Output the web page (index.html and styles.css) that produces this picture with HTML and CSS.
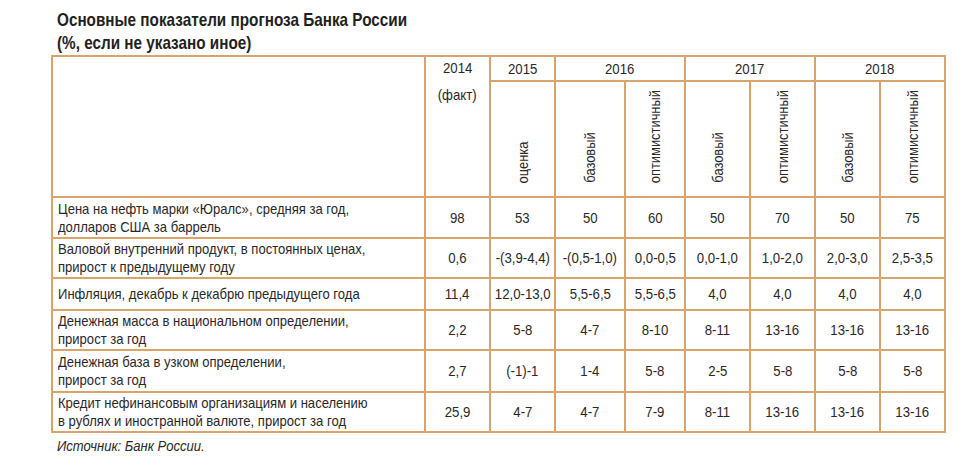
FILE: index.html
```html
<!DOCTYPE html>
<html lang="ru">
<head>
<meta charset="utf-8">
<link rel="stylesheet" href="styles.css">
</head>
<body>
<div class="page">
  <h1 class="title"><span class="sx">Основные показатели прогноза Банка России<br>(%, если не указано иное)</span></h1>
  <table class="grid">
    <colgroup>
      <col class="c-label"><col class="c65"><col class="c65"><col class="c70"><col class="c60"><col class="c65"><col class="c65"><col class="c65"><col class="c64">
    </colgroup>
    <thead>
      <tr class="years">
        <th rowspan="2" class="blank"></th>
        <th rowspan="2" class="fact"><div><span class="num">2014</span></div><div class="fact-note"><span class="num">(факт)</span></div></th>
        <th><span class="num">2015</span></th>
        <th colspan="2"><span class="num">2016</span></th>
        <th colspan="2"><span class="num">2017</span></th>
        <th colspan="2"><span class="num">2018</span></th>
      </tr>
      <tr class="scen">
        <th><span class="vert"><span class="vs">оценка</span></span></th>
        <th><span class="vert"><span class="vs">базовый</span></span></th>
        <th><span class="vert"><span class="vs">оптимистичный</span></span></th>
        <th><span class="vert"><span class="vs">базовый</span></span></th>
        <th><span class="vert"><span class="vs">оптимистичный</span></span></th>
        <th><span class="vert"><span class="vs">базовый</span></span></th>
        <th><span class="vert"><span class="vs">оптимистичный</span></span></th>
      </tr>
    </thead>
    <tbody>
      <tr class="row-a">
        <td class="label"><span class="sx">Цена на нефть марки «Юралс», средняя за год,<br>долларов США за баррель</span></td>
        <td><span class="num">98</span></td><td><span class="num">53</span></td><td><span class="num">50</span></td><td><span class="num">60</span></td><td><span class="num">50</span></td><td><span class="num">70</span></td><td><span class="num">50</span></td><td><span class="num">75</span></td>
      </tr>
      <tr class="row-b">
        <td class="label"><span class="sx">Валовой внутренний продукт, в постоянных ценах,<br>прирост к предыдущему году</span></td>
        <td><span class="num">0,6</span></td><td><span class="num">-(3,9-4,4)</span></td><td><span class="num">-(0,5-1,0)</span></td><td><span class="num">0,0-0,5</span></td><td><span class="num">0,0-1,0</span></td><td><span class="num">1,0-2,0</span></td><td><span class="num">2,0-3,0</span></td><td><span class="num">2,5-3,5</span></td>
      </tr>
      <tr class="row-c">
        <td class="label"><span class="sx">Инфляция, декабрь к декабрю предыдущего года</span></td>
        <td><span class="num">11,4</span></td><td><span class="num">12,0-13,0</span></td><td><span class="num">5,5-6,5</span></td><td><span class="num">5,5-6,5</span></td><td><span class="num">4,0</span></td><td><span class="num">4,0</span></td><td><span class="num">4,0</span></td><td><span class="num">4,0</span></td>
      </tr>
      <tr class="row-d">
        <td class="label"><span class="sx">Денежная масса в национальном определении,<br>прирост за год</span></td>
        <td><span class="num">2,2</span></td><td><span class="num">5-8</span></td><td><span class="num">4-7</span></td><td><span class="num">8-10</span></td><td><span class="num">8-11</span></td><td><span class="num">13-16</span></td><td><span class="num">13-16</span></td><td><span class="num">13-16</span></td>
      </tr>
      <tr class="row-e">
        <td class="label"><span class="sx">Денежная база в узком определении,<br>прирост за год</span></td>
        <td><span class="num">2,7</span></td><td><span class="num">(-1)-1</span></td><td><span class="num">1-4</span></td><td><span class="num">5-8</span></td><td><span class="num">2-5</span></td><td><span class="num">5-8</span></td><td><span class="num">5-8</span></td><td><span class="num">5-8</span></td>
      </tr>
      <tr class="row-f">
        <td class="label"><span class="sx">Кредит нефинансовым организациям и населению<br>в рублях и иностранной валюте, прирост за год</span></td>
        <td><span class="num">25,9</span></td><td><span class="num">4-7</span></td><td><span class="num">4-7</span></td><td><span class="num">7-9</span></td><td><span class="num">8-11</span></td><td><span class="num">13-16</span></td><td><span class="num">13-16</span></td><td><span class="num">13-16</span></td>
      </tr>
    </tbody>
  </table>
  <p class="source"><span class="sx">Источник: Банк России.</span></p>
</div>
</body>
</html>
```

FILE: styles.css
```css
html, body {
  margin: 0;
  padding: 0;
  background: #ffffff;
}

body {
  font-family: "Liberation Sans", Arial, sans-serif;
  color: #2b2728;
}

.page {
  padding: 8px 0 0 51px;
}

/* condensed look: the reference uses a narrow grotesque */
.sx {
  display: inline-block;
  white-space: nowrap;
  transform-origin: left center;
}

.title {
  margin: 0 0 1px 6px;
  font-size: 18.5px;
  line-height: 23px;
  font-weight: bold;
  color: #231f20;
}

.title .sx { transform: scaleX(0.826); }

.grid {
  border-collapse: collapse;
  table-layout: fixed;
  width: 893px;
  font-size: 14.5px;
}

.c-label { width: 373px; }
.c65 { width: 65px; }
.c70 { width: 70px; }
.c60 { width: 60px; }
.c64 { width: 65px; }

.grid th,
.grid td {
  border: 2px solid #d8a46c;
  padding: 0;
  text-align: center;
  vertical-align: middle;
  font-weight: normal;
}

.num {
  display: inline-block;
  white-space: nowrap;
  font-size: 15px;
  transform: scaleX(0.88);
  transform-origin: center center;
}

.years th {
  height: 23px;
  line-height: 18px;
}

.years .fact {
  vertical-align: top;
  padding-top: 1px;
  line-height: 20px;
}

.fact-note {
  margin-top: 7px;
}

.scen th {
  height: 104px;
  vertical-align: bottom;
  padding-bottom: 10px;
}

.vert {
  display: inline-block;
  writing-mode: vertical-rl;
  transform: rotate(180deg);
  line-height: 16px;
  font-size: 14px;
}

.vs {
  display: inline-block;
  white-space: nowrap;
  transform: scaleY(0.92);
  transform-origin: center top;
}

.grid td {
  line-height: 18px;
}

.grid td.label {
  text-align: left;
  padding-left: 5px;
  white-space: nowrap;
  overflow: hidden;
}

.label .sx { transform: scaleX(0.9); }

.row-a td { height: 39px; }
.row-b td { height: 38px; }
.row-c td { height: 29.5px; }
.row-d td { height: 38px; }
.row-e td { height: 40.5px; }
.row-f td { height: 38px; }

.source {
  margin: 4px 0 0 6px;
  font-size: 14.5px;
  font-style: italic;
  line-height: 18px;
}

.source .sx { transform: scaleX(0.9); }
```
